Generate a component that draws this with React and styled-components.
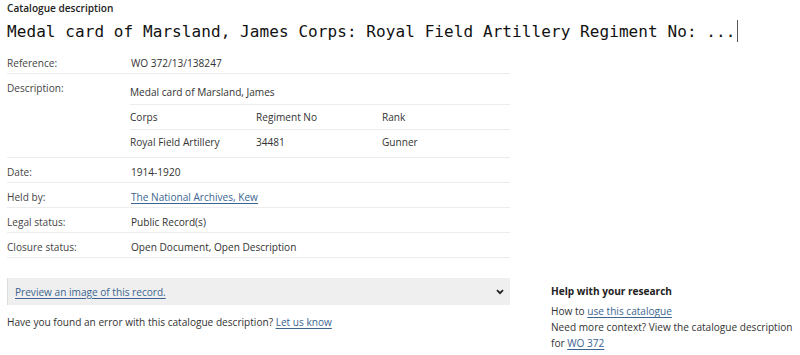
import React from 'react';
import styled, { createGlobalStyle } from 'styled-components';

const GlobalStyle = createGlobalStyle`
  html, body {
    margin: 0;
    padding: 0;
    background: #fff;
  }
  body {
    font-family: "Open Sans", "Liberation Sans", sans-serif;
    font-size: 10.1px;
    color: #333;
  }
`;

const Page = styled.div`
  padding: 0 0 0 7px;
`;

const Eyebrow = styled.div`
  font-size: 10.1px;
  font-weight: 600;
  line-height: 16px;
  color: #222;
`;

const Title = styled.h1`
  margin: 4px 0 5px;
  font-family: "DejaVu Sans Mono", "Liberation Mono", monospace;
  font-size: 16px;
  font-weight: normal;
  line-height: 24px;
  color: #111;
  letter-spacing: 0.08px;
`;

const Caret = styled.span`
  display: inline-block;
  width: 1px;
  height: 22px;
  margin-left: 2px;
  vertical-align: -5px;
  background: #555;
`;

const Details = styled.div`
  width: 503px;
`;

const Row = styled.div`
  display: grid;
  grid-template-columns: 124px 1fr;
  border-bottom: 1px solid #ececec;
  padding: ${(p) => (p.nested ? '6px 0 3px' : '6px 0 2px')};
  line-height: 16px;
`;

const Label = styled.div`
  color: #444;
`;

const Value = styled.div`
  color: #333;
`;

const SubRow = styled.div`
  display: grid;
  grid-template-columns: ${(p) => (p.cols ? 'repeat(3, 126px)' : '1fr')};
  padding: 4px 0;
  border-bottom: ${(p) => (p.last ? 'none' : '1px solid #ececec')};
  margin-left: -1px;
`;

const Link = styled.a`
  color: #3b6590;
  text-decoration: underline;
  text-underline-offset: 2px;
  text-decoration-thickness: 1px;
`;

const Bottom = styled.div`
  display: flex;
  gap: 41px;
  margin-top: 20px;
`;

const LeftCol = styled.div`
  flex: 0 0 503px;
`;

const Preview = styled.div`
  display: flex;
  align-items: center;
  justify-content: space-between;
  height: 27px;
  padding: 0 6px 0 7px;
  background: #efefef;
  border-left: 1px solid #dcdcdc;
  box-sizing: border-box;
`;

const Chevron = styled.svg`
  width: 8px;
  height: 6px;
`;

const Note = styled.p`
  margin: 9px 0 0;
  line-height: 16px;
`;

const Aside = styled.div`
  flex: 1;
  min-width: 0;
  padding-top: 5px;
  line-height: 16px;
`;

const AsideTitle = styled.div`
  font-weight: 700;
  color: #222;
  margin-bottom: 4px;
`;

const AsideText = styled.div`
  line-height: 16px;
  width: 242px;
`;

export default function App() {
  return (
    <>
      <GlobalStyle />
      <Page>
        <Eyebrow>Catalogue description</Eyebrow>
        <Title>
          Medal card of Marsland, James Corps: Royal Field Artillery Regiment No: ...
          <Caret />
        </Title>
        <Details>
          <Row>
            <Label>Reference:</Label>
            <Value>WO 372/13/138247</Value>
          </Row>
          <Row nested>
            <Label>Description:</Label>
            <Value>
              <SubRow>Medal card of Marsland, James</SubRow>
              <SubRow cols>
                <span>Corps</span>
                <span>Regiment No</span>
                <span>Rank</span>
              </SubRow>
              <SubRow cols last>
                <span>Royal Field Artillery</span>
                <span>34481</span>
                <span>Gunner</span>
              </SubRow>
            </Value>
          </Row>
          <Row>
            <Label>Date:</Label>
            <Value>1914-1920</Value>
          </Row>
          <Row>
            <Label>Held by:</Label>
            <Value>
              <Link href="#">The National Archives, Kew</Link>
            </Value>
          </Row>
          <Row>
            <Label>Legal status:</Label>
            <Value>Public Record(s)</Value>
          </Row>
          <Row>
            <Label>Closure status:</Label>
            <Value>Open Document, Open Description</Value>
          </Row>
        </Details>
        <Bottom>
          <LeftCol>
            <Preview>
              <Link href="#">Preview an image of this record.</Link>
              <Chevron viewBox="0 0 8 6">
                <path d="M1 1.2 L4 4.2 L7 1.2" fill="none" stroke="#222" strokeWidth="1.8" />
              </Chevron>
            </Preview>
            <Note>
              Have you found an error with this catalogue description? <Link href="#">Let us know</Link>
            </Note>
          </LeftCol>
          <Aside>
            <AsideTitle>Help with your research</AsideTitle>
            <AsideText>
              How to <Link href="#">use this catalogue</Link>
            </AsideText>
            <AsideText>
              Need more context? View the catalogue description for <Link href="#">WO 372</Link>
            </AsideText>
          </Aside>
        </Bottom>
      </Page>
    </>
  );
}
